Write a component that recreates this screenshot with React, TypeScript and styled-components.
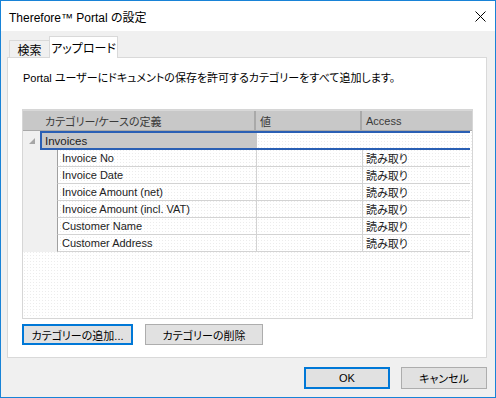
import React from "react";
import styled, { createGlobalStyle } from "styled-components";

const FONT = `"Liberation Sans", "Noto Sans CJK JP", sans-serif`;

const Global = createGlobalStyle`
  html, body { margin: 0; padding: 0; background: #fff; }
  body { font-family: ${FONT}; font-size: 11px; font-feature-settings: "palt"; }
  * { box-sizing: border-box; }
`;

const Window = styled.div`
  width: 496px;
  height: 398px;
  border: 1px solid #1883d7;
  display: flex;
  flex-direction: column;
  font-family: ${FONT};
  font-size: 11px;
  font-feature-settings: "palt";
  color: #000;
`;

const TitleBar = styled.div`
  height: 30px;
  background: #fff;
  display: flex;
  align-items: center;
  justify-content: space-between;
  padding: 0 9px 0 8px;
`;

const Title = styled.span`
  font-size: 12px;
`;

const Client = styled.div`
  flex: 1;
  background: #f0f0f0;
  display: flex;
  flex-direction: column;
  padding: 6px 8px 6px 6px;
`;

const TabRow = styled.div`
  display: flex;
  align-items: flex-end;
  height: 21px;
  padding-left: 2px;
  position: relative;
  z-index: 1;
  margin-bottom: -1px;
`;

const Tab = styled.div<{ $active?: boolean; $w: number }>`
  width: ${(p) => p.$w}px;
  height: ${(p) => (p.$active ? "22px" : "18px")};
  display: flex;
  align-items: center;
  justify-content: center;
  border: 1px solid #d9d9d9;
  border-bottom: ${(p) => (p.$active ? "none" : "1px solid #d9d9d9")};
  background: ${(p) => (p.$active ? "#fff" : "#f0f0f0")};
  margin-left: ${(p) => (p.$active ? "-1px" : "0")};
  font-size: 12px;
`;

const Panel = styled.div`
  height: 301px;
  border: 1px solid #d9d9d9;
  background: #fff;
  display: flex;
  flex-direction: column;
  padding: 12px 14px 0 14px;
`;

const Description = styled.div`
  padding-left: 1px;
  height: 16px;
  line-height: 16px;
`;

const Grid = styled.div`
  margin-top: 23px;
  width: 451px;
  height: 210px;
  border: 1px solid #d6d6d6;
  background-color: #fff;
  background-image: radial-gradient(#ececec 0.6px, transparent 0.7px);
  background-size: 3px 3px;
  display: flex;
  flex-direction: column;
`;

const HeaderRow = styled.div`
  display: grid;
  grid-template-columns: 233px 106px 108px;
  height: 21px;
  background: #c8c8c8;
  border-top: 1px solid #d8d8d8;
  border-bottom: 1px solid #a8a8a8;
`;

const HeaderCell = styled.div<{ $pad?: number }>`
  display: flex;
  align-items: center;
  padding-left: ${(p) => p.$pad ?? 4}px;
  border-right: 2px solid #a9a9a9;
  color: #3a3a3a;
  &:last-child { border-right: none; }
`;

const GroupRow = styled.div`
  display: flex;
  height: 19px;
  width: 447px;
`;

const Expander = styled.div`
  width: 17px;
  background: #f0f0f0;
  display: flex;
  align-items: center;
  justify-content: center;
`;

const GroupBox = styled.div`
  flex: 1;
  display: grid;
  grid-template-columns: 215px 1fr;
  border-top: 2px solid #2a5fb4;
  border-bottom: 2px solid #2a5fb4;
  border-left: 2px solid #2a5fb4;
`;

const GroupName = styled.div`
  background: #c8c8c8;
  display: flex;
  align-items: center;
  padding-left: 3px;
  color: #222;
  font-size: 11.5px;
`;

const GroupRest = styled.div``;

const ChildRow = styled.div`
  display: flex;
  height: 17px;
  width: 447px;
`;

const Indent = styled.div`
  width: 34px;
  background: #f0f0f0;
`;

const ChildCells = styled.div`
  flex: 1;
  display: grid;
  grid-template-columns: 199px 106px 1fr;
  border-left: 1px solid #a0a0a0;
  border-bottom: 1px solid #d3d3d3;
`;

const Cell = styled.div<{ $pad?: number }>`
  display: flex;
  align-items: center;
  padding-left: ${(p) => p.$pad ?? 4}px;
  border-right: 1px solid #d3d3d3;
  color: #222;
  white-space: nowrap;
  &:last-child { border-right: none; }
`;

const ButtonRow = styled.div`
  display: flex;
  gap: 12px;
  margin-top: 5px;
`;

const Button = styled.div<{ $w: number; $default?: boolean }>`
  width: ${(p) => p.$w}px;
  height: 21px;
  display: flex;
  align-items: center;
  justify-content: center;
  background: #e1e1e1;
  border: ${(p) => (p.$default ? "2px solid #0078d7" : "1px solid #adadad")};
  color: #000;
`;

const Footer = styled.div`
  display: flex;
  justify-content: flex-end;
  gap: 11px;
  margin-top: 9px;
`;

const FooterButton = styled(Button)`
  height: 22px;
`;

const rows = [
  "Invoice No",
  "Invoice Date",
  "Invoice Amount (net)",
  "Invoice Amount (incl. VAT)",
  "Customer Name",
  "Customer Address",
];

export default function App() {
  return (
    <>
      <Global />
      <Window>
        <TitleBar>
          <Title>Therefore™ Portal の設定</Title>
          <svg width="11" height="11" viewBox="0 0 11 11">
            <path d="M0.5 0.5 L10.5 10.5 M10.5 0.5 L0.5 10.5" stroke="#000" strokeWidth="1" />
          </svg>
        </TitleBar>
        <Client>
          <TabRow>
            <Tab $w={41}>検索</Tab>
            <Tab $w={69} $active>アップロード</Tab>
          </TabRow>
          <Panel>
            <Description>Portal ユーザーにドキュメントの保存を許可するカテゴリーをすべて追加します。</Description>
            <Grid>
              <HeaderRow>
                <HeaderCell $pad={22}>カテゴリー/ケースの定義</HeaderCell>
                <HeaderCell>値</HeaderCell>
                <HeaderCell>Access</HeaderCell>
              </HeaderRow>
              <GroupRow>
                <Expander>
                  <svg width="6" height="6" viewBox="0 0 6 6">
                    <polygon points="6,0 6,6 0,6" fill="#a6a6a6" />
                  </svg>
                </Expander>
                <GroupBox>
                  <GroupName>Invoices</GroupName>
                  <GroupRest />
                </GroupBox>
              </GroupRow>
              {rows.map((r) => (
                <ChildRow key={r}>
                  <Indent />
                  <ChildCells>
                    <Cell>{r}</Cell>
                    <Cell />
                    <Cell $pad={3}>読み取り</Cell>
                  </ChildCells>
                </ChildRow>
              ))}
            </Grid>
            <ButtonRow>
              <Button $w={111} $default>カテゴリーの追加...</Button>
              <Button $w={118}>カテゴリーの削除</Button>
            </ButtonRow>
          </Panel>
          <Footer>
            <FooterButton $w={86} $default>OK</FooterButton>
            <FooterButton $w={86}>キャンセル</FooterButton>
          </Footer>
        </Client>
      </Window>
    </>
  );
}
